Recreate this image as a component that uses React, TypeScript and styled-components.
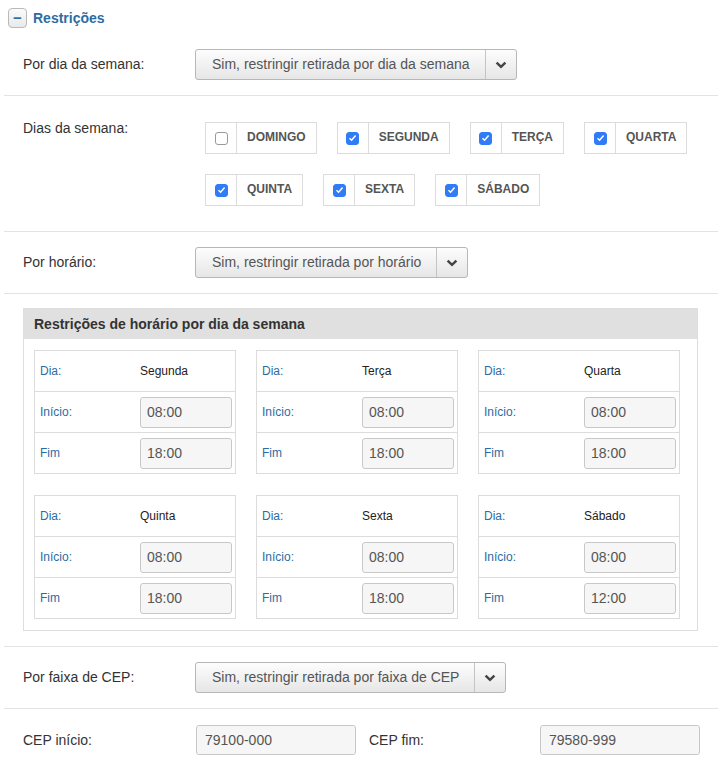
import React from 'react';
import styled, { createGlobalStyle } from 'styled-components';

const GlobalStyle = createGlobalStyle`
  body {
    margin: 0;
    background: #fff;
    font-family: "Liberation Sans", Arial, Helvetica, sans-serif;
    color: #333;
  }
`;

type Day = { name: string; checked: boolean };
type Schedule = { day: string; start: string; end: string };

const days: Day[] = [
  { name: 'DOMINGO', checked: false },
  { name: 'SEGUNDA', checked: true },
  { name: 'TERÇA', checked: true },
  { name: 'QUARTA', checked: true },
  { name: 'QUINTA', checked: true },
  { name: 'SEXTA', checked: true },
  { name: 'SÁBADO', checked: true },
];

const schedules: Schedule[] = [
  { day: 'Segunda', start: '08:00', end: '18:00' },
  { day: 'Terça', start: '08:00', end: '18:00' },
  { day: 'Quarta', start: '08:00', end: '18:00' },
  { day: 'Quinta', start: '08:00', end: '18:00' },
  { day: 'Sexta', start: '08:00', end: '18:00' },
  { day: 'Sábado', start: '08:00', end: '12:00' },
];

const Chevron = () => (
  <svg width="12" height="8" viewBox="0 0 12 8">
    <polyline points="1.6,1.6 6,5.8 10.4,1.6" fill="none" stroke="#444" strokeWidth="2.5" />
  </svg>
);

const Check = () => (
  <svg width="9" height="8" viewBox="0 0 9 8">
    <polyline points="1.5,4.2 3.6,6.2 7.6,1.6" fill="none" stroke="#fff" strokeWidth="1.5" />
  </svg>
);

// botão tipo select com seta
const SelectBox: React.FC<{ text: string }> = ({ text }) => (
  <Select>
    <SelectText>{text}</SelectText>
    <SelectArrow>
      <Chevron />
    </SelectArrow>
  </Select>
);

const App: React.FC = () => {
  return (
    <Page>
      <GlobalStyle />
      <Header>
        <ToggleButton>−</ToggleButton>
        <Title>Restrições</Title>
      </Header>

      <Row>
        <Label>Por dia da semana:</Label>
        <SelectBox text="Sim, restringir retirada por dia da semana" />
      </Row>

      <Row>
        <Label $top>Dias da semana:</Label>
        <DayList>
          {days.map((d) => (
            <DayItem key={d.name}>
              <BoxCell>
                <CheckBox $checked={d.checked}>{d.checked && <Check />}</CheckBox>
              </BoxCell>
              <DayName>{d.name}</DayName>
            </DayItem>
          ))}
        </DayList>
      </Row>

      <Row>
        <Label>Por horário:</Label>
        <SelectBox text="Sim, restringir retirada por horário" />
      </Row>

      <PanelRow>
        <Panel>
          <PanelHeader>Restrições de horário por dia da semana</PanelHeader>
          <PanelBody>
            {schedules.map((s) => (
              <Card key={s.day}>
                <CardRow>
                  <CardLabel>Dia:</CardLabel>
                  <CardValue>{s.day}</CardValue>
                </CardRow>
                <CardRow>
                  <CardLabel>Início:</CardLabel>
                  <TimeInput>{s.start}</TimeInput>
                </CardRow>
                <CardRow>
                  <CardLabel>Fim</CardLabel>
                  <TimeInput>{s.end}</TimeInput>
                </CardRow>
              </Card>
            ))}
          </PanelBody>
        </Panel>
      </PanelRow>

      <Row>
        <Label>Por faixa de CEP:</Label>
        <SelectBox text="Sim, restringir retirada por faixa de CEP" />
      </Row>

      <Row $last>
        <Label>CEP início:</Label>
        <CepInput>79100-000</CepInput>
        <SideLabel>CEP fim:</SideLabel>
        <CepInput>79580-999</CepInput>
      </Row>
    </Page>
  );
};

export default App;

const Page = styled.div`
  width: 718px;
  padding-left: 4px;
  box-sizing: border-box;
`;

const Header = styled.div`
  display: flex;
  align-items: center;
  gap: 6px;
  padding: 8px 0 0 4px;
  margin-bottom: 6px;
`;

const ToggleButton = styled.span`
  width: 17px;
  height: 18px;
  border: 1px solid #b9b9b9;
  border-radius: 4px;
  background: linear-gradient(#fbfbfb, #e9e9e9);
  color: #2d6ca2;
  font-weight: bold;
  font-size: 15px;
  line-height: 17px;
  text-align: center;
`;

const Title = styled.span`
  color: #2d6ca2;
  font-weight: bold;
  font-size: 14px;
`;

const Row = styled.div<{ $last?: boolean }>`
  display: flex;
  align-items: flex-start;
  padding: ${(p) => (p.$last ? '16px' : '15px')} 0 15px 19px;
  border-bottom: ${(p) => (p.$last ? 'none' : '1px solid #e3e3e3')};
`;

const Label = styled.div<{ $top?: boolean }>`
  width: 172px;
  flex-shrink: 0;
  font-size: 14px;
  line-height: 31px;
  padding-top: ${(p) => (p.$top ? '2px' : '0')};
  color: #333;
`;

const SideLabel = styled(Label)`
  width: 170px;
  margin-left: 13px;
  line-height: 30px;
`;

const Select = styled.div`
  display: flex;
  height: 29px;
  border: 1px solid #b7b7b7;
  border-radius: 3px;
  background: linear-gradient(#fdfdfd, #e6e6e6);
`;

const SelectText = styled.span`
  padding: 0 15px 0 16px;
  font-size: 14px;
  line-height: 29px;
  color: #555;
`;

const SelectArrow = styled.span`
  width: 30px;
  border-left: 1px solid #c4c4c4;
  display: flex;
  align-items: center;
  justify-content: center;
`;

const DayList = styled.div`
  display: flex;
  flex-wrap: wrap;
  gap: 20px;
  margin: 11px 0 10px 10px;
  width: 513px;
`;

const DayItem = styled.div`
  display: flex;
  height: 30px;
  border: 1px solid #dcdcdc;
`;

const BoxCell = styled.span`
  width: 30px;
  border-right: 1px solid #dcdcdc;
  display: flex;
  align-items: center;
  justify-content: center;
`;

const CheckBox = styled.span<{ $checked: boolean }>`
  width: 13px;
  height: 13px;
  box-sizing: border-box;
  border-radius: 3px;
  display: flex;
  align-items: center;
  justify-content: center;
  background: ${(p) => (p.$checked ? '#2f7cf6' : '#fff')};
  border: 1px solid ${(p) => (p.$checked ? '#2f7cf6' : '#9a9a9a')};
`;

const DayName = styled.span`
  padding: 0 10px;
  font-size: 12px;
  font-weight: bold;
  color: #555;
  line-height: 29px;
`;

const PanelRow = styled.div`
  padding: 14px 20px 15px 19px;
  border-bottom: 1px solid #e3e3e3;
`;

const Panel = styled.div`
  border: 1px solid #dedede;
`;

const PanelHeader = styled.div`
  background: #e0e0e0;
  height: 30px;
  line-height: 30px;
  padding-left: 10px;
  font-size: 14px;
  font-weight: bold;
  color: #333;
`;

const PanelBody = styled.div`
  display: grid;
  grid-template-columns: repeat(3, 202px);
  column-gap: 20px;
  row-gap: 21px;
  padding: 11px 0 11px 10px;
`;

const Card = styled.div`
  border: 1px solid #dcdcdc;
`;

const CardRow = styled.div`
  display: flex;
  align-items: center;
  height: 40px;
  border-bottom: 1px solid #dcdcdc;

  &:last-child {
    border-bottom: none;
  }
`;

const CardLabel = styled.span`
  width: 100px;
  padding-left: 5px;
  font-size: 12px;
  color: #2d6ca2;
`;

const CardValue = styled.span`
  font-size: 12px;
  color: #222;
`;

const TimeInput = styled.span`
  height: 29px;
  border: 1px solid #c8c8c8;
  border-radius: 3px;
  background: #f6f6f6;
  padding-left: 6px;
  width: 84px;
  font-size: 14px;
  line-height: 29px;
  color: #555;
`;

const CepInput = styled.span`
  width: 150px;
  height: 28px;
  margin-left: 1px;
  padding-left: 8px;
  border: 1px solid #c8c8c8;
  border-radius: 3px;
  background: #f6f6f6;
  font-size: 14px;
  line-height: 28px;
  color: #555;
  flex-shrink: 0;
`;
